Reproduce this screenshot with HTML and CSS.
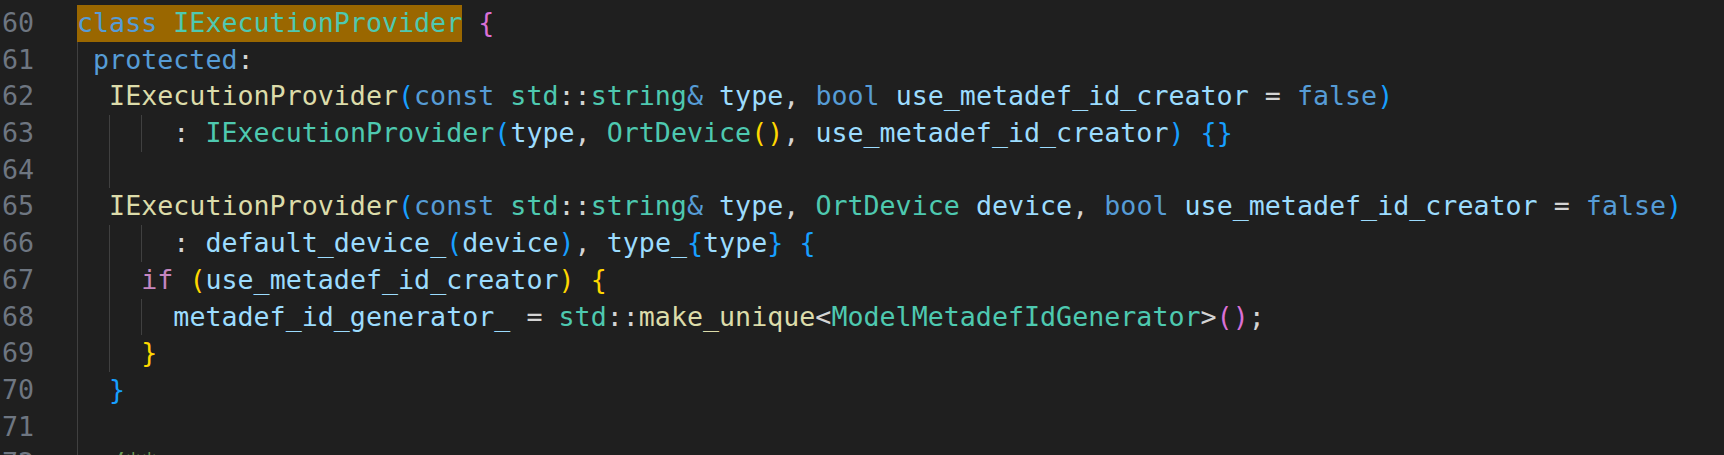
FILE: index.html
```html
<!DOCTYPE html>
<html>
<head>
<meta charset="utf-8">
<link rel="stylesheet" href="styles.css">
</head>
<body>
<div class="editor">
  <div class="row"><span class="ln">60</span><span class="code"><span class="sel"><span class="kw">class</span> <span class="ty">IExecutionProvider</span></span> <span class="b2">{</span></span></div>
  <div class="row"><span class="ln">61</span><span class="code"><span class="ig"> </span><span class="kw">protected</span><span class="pl">:</span></span></div>
  <div class="row"><span class="ln">62</span><span class="code"><span class="ig">  </span><span class="fn">IExecutionProvider</span><span class="b3">(</span><span class="kw">const</span> <span class="ty">std</span><span class="pl">::</span><span class="ty">string</span><span class="kw">&amp;</span> <span class="va">type</span><span class="pl">,</span> <span class="kw">bool</span> <span class="va">use_metadef_id_creator</span> <span class="pl">=</span> <span class="kw">false</span><span class="b3">)</span></span></div>
  <div class="row"><span class="ln">63</span><span class="code"><span class="ig">  </span><span class="ig">  </span><span class="ig">  </span><span class="pl">:</span> <span class="ty">IExecutionProvider</span><span class="b3">(</span><span class="va">type</span><span class="pl">,</span> <span class="ty">OrtDevice</span><span class="b1">()</span><span class="pl">,</span> <span class="va">use_metadef_id_creator</span><span class="b3">)</span> <span class="b3">{}</span></span></div>
  <div class="row"><span class="ln">64</span><span class="code"><span class="ig">  </span><span class="ig">  </span></span></div>
  <div class="row"><span class="ln">65</span><span class="code"><span class="ig">  </span><span class="fn">IExecutionProvider</span><span class="b3">(</span><span class="kw">const</span> <span class="ty">std</span><span class="pl">::</span><span class="ty">string</span><span class="kw">&amp;</span> <span class="va">type</span><span class="pl">,</span> <span class="ty">OrtDevice</span> <span class="va">device</span><span class="pl">,</span> <span class="kw">bool</span> <span class="va">use_metadef_id_creator</span> <span class="pl">=</span> <span class="kw">false</span><span class="b3">)</span></span></div>
  <div class="row"><span class="ln">66</span><span class="code"><span class="ig">  </span><span class="ig">  </span><span class="ig">  </span><span class="pl">:</span> <span class="va">default_device_</span><span class="b3">(</span><span class="va">device</span><span class="b3">)</span><span class="pl">,</span> <span class="va">type_</span><span class="b3">{</span><span class="va">type</span><span class="b3">}</span> <span class="b3">{</span></span></div>
  <div class="row"><span class="ln">67</span><span class="code"><span class="ig">  </span><span class="ig">  </span><span class="ctl">if</span> <span class="b1">(</span><span class="va">use_metadef_id_creator</span><span class="b1">)</span> <span class="b1">{</span></span></div>
  <div class="row"><span class="ln">68</span><span class="code"><span class="ig">  </span><span class="ig">  </span><span class="ig">  </span><span class="va">metadef_id_generator_</span> <span class="pl">=</span> <span class="ty">std</span><span class="pl">::</span><span class="fn">make_unique</span><span class="pl">&lt;</span><span class="ty">ModelMetadefIdGenerator</span><span class="pl">&gt;</span><span class="b2">()</span><span class="pl">;</span></span></div>
  <div class="row"><span class="ln">69</span><span class="code"><span class="ig">  </span><span class="ig">  </span><span class="b1">}</span></span></div>
  <div class="row"><span class="ln">70</span><span class="code"><span class="ig">  </span><span class="b3">}</span></span></div>
  <div class="row"><span class="ln">71</span><span class="code"><span class="ig">  </span></span></div>
  <div class="row"><span class="ln">72</span><span class="code"><span class="ig">  </span><span class="cm">/**</span></span></div>
</div>
</body>
</html>
```

FILE: styles.css
```css
html, body {
  margin: 0;
  padding: 0;
  background: #1f1f1f;
  overflow: hidden;
}

.editor {
  padding-top: 5px;
  font-family: "DejaVu Sans Mono", monospace;
  font-size: 26.67px;
  line-height: 36.7px;
  color: #d4d4d4;
}

.row {
  display: flex;
  height: 36.7px;
  white-space: pre;
}

.ln {
  width: 34px;
  text-align: right;
  color: #6e7681;
  flex: none;
}

.code {
  margin-left: 43px;
  flex: none;
}

.ig {
  display: inline-block;
  box-shadow: inset 1px 0 0 #404040;
}

.sel {
  display: inline-block;
  background: #9a6700;
}

.kw { color: #569cd6; }
.ty { color: #4ec9b0; }
.fn { color: #dcdcaa; }
.va { color: #9cdcfe; }
.pl { color: #d4d4d4; }
.ctl { color: #c586c0; }
.cm { color: #6a9955; }
.b1 { color: #ffd700; }
.b2 { color: #da70d6; }
.b3 { color: #179fff; }
```
